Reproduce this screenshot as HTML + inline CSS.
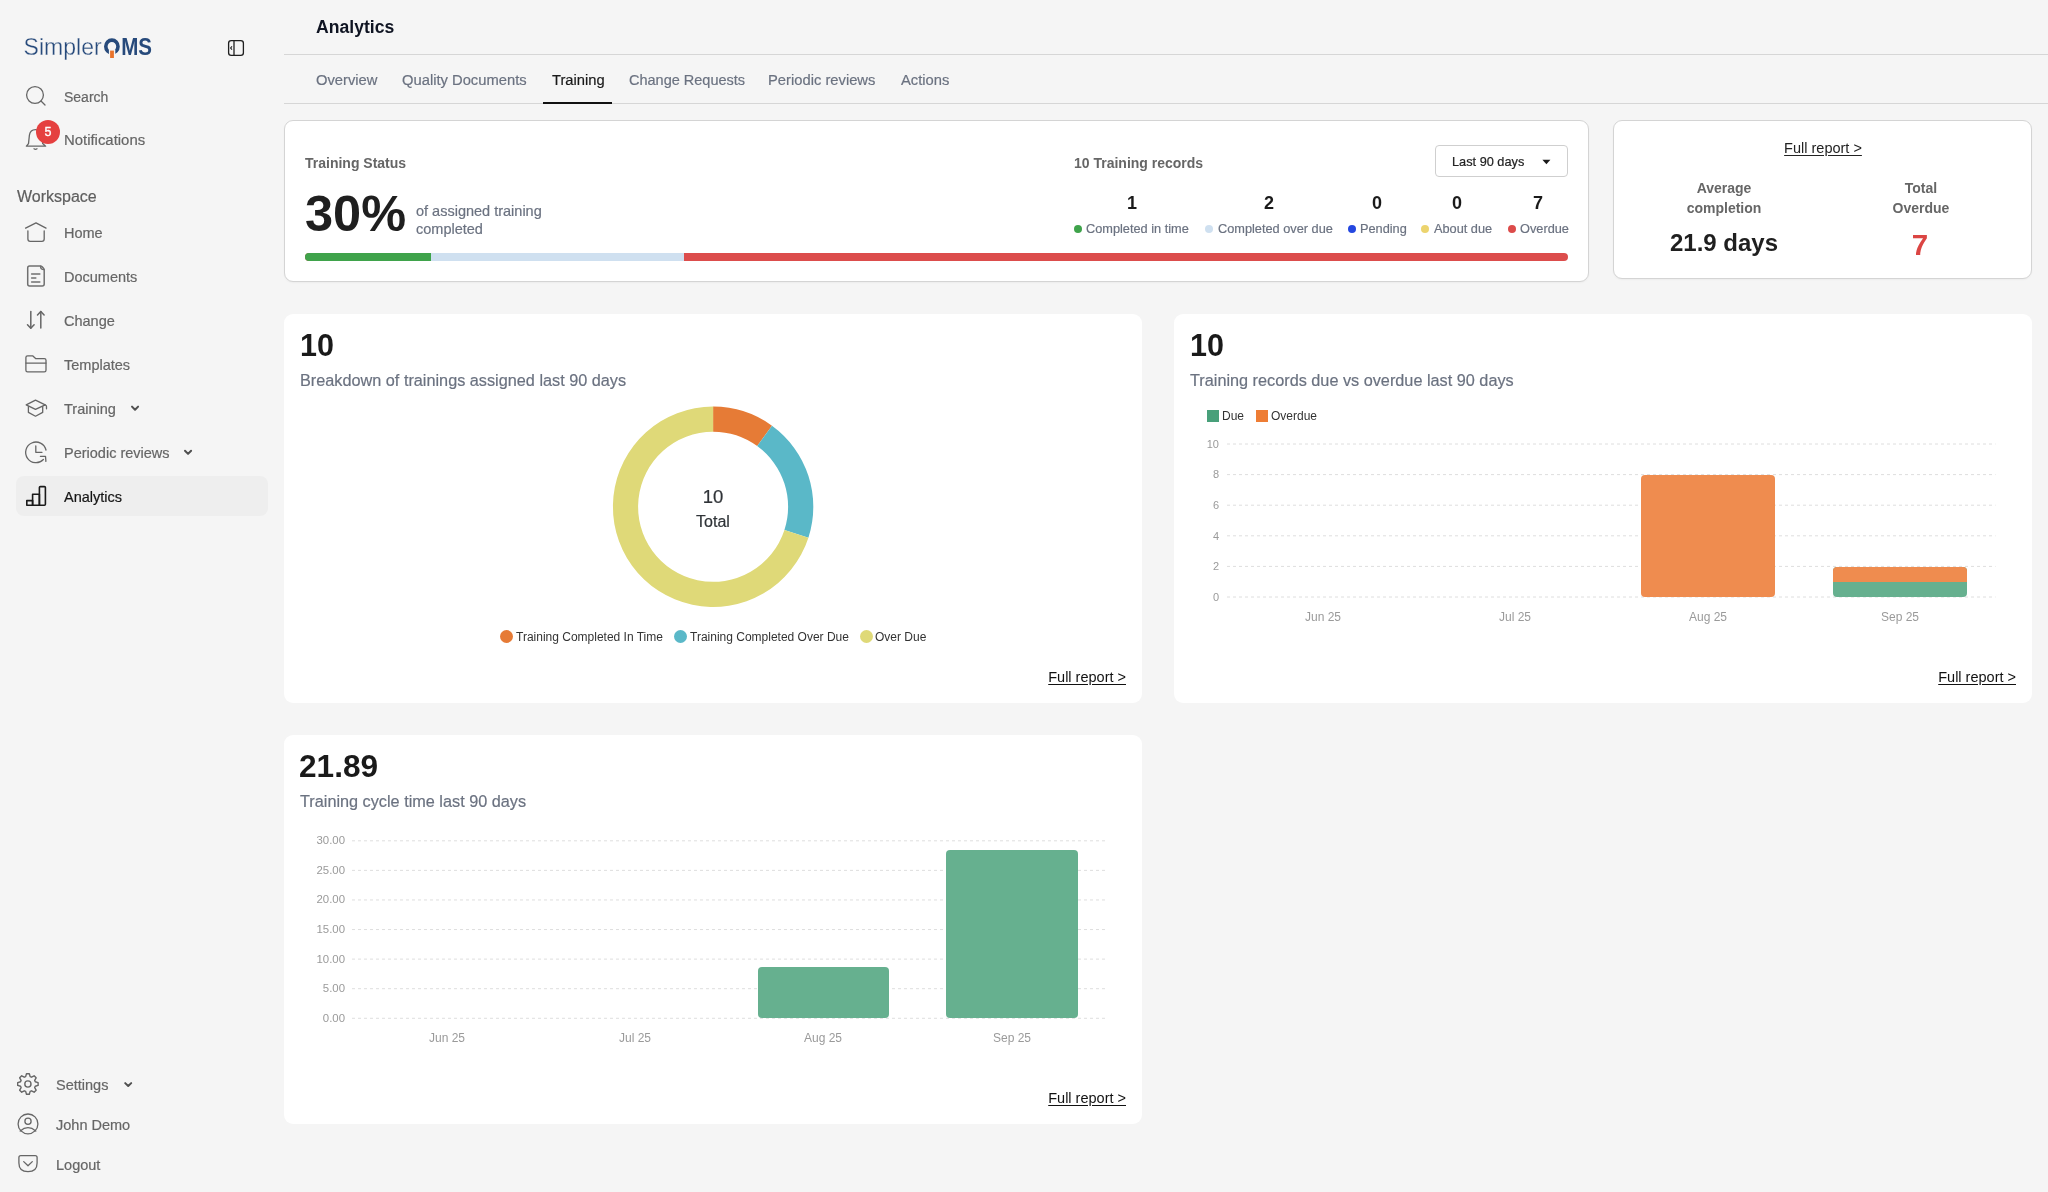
<!DOCTYPE html>
<html><head><meta charset="utf-8"><title>Analytics</title>
<style>
html,body{margin:0;padding:0;}
body{width:2048px;height:1192px;position:relative;overflow:hidden;background:#f5f5f5;font-family:"Liberation Sans", sans-serif;}
.t{position:absolute;will-change:transform;white-space:nowrap;font-variant-ligatures:none;line-height:1;font-family:"Liberation Sans", sans-serif;}
svg{font-family:"Liberation Sans", sans-serif;will-change:transform;}
</style></head><body>
<svg style="position:absolute;left:0;top:0" width="284" height="70">
<text x="23.6" y="54.7" font-family='Liberation Sans' font-size="23.6" fill="#274a7b" stroke="#f5f5f5" stroke-width="0.3" textLength="78" lengthAdjust="spacingAndGlyphs">Simpler</text>
<ellipse cx="111.9" cy="46.55" rx="6.1" ry="6.45" fill="none" stroke="#274a7b" stroke-width="3.6"/>
<rect x="108.9" y="49.5" width="6.4" height="8" fill="#f5f5f5"/>
<rect x="110.1" y="50.6" width="3.8" height="7.4" fill="#e9732c"/>
<text x="121.2" y="54.7" font-family='Liberation Sans' font-weight="bold" font-size="23.4" fill="#274a7b" textLength="30.8" lengthAdjust="spacingAndGlyphs">MS</text>
</svg>
<svg style="position:absolute;left:220px;top:32px" width="32" height="32" viewBox="220 32 32 32">
<rect x="228.6" y="40.6" width="14.8" height="14.8" rx="2.6" fill="none" stroke="#1f1f1f" stroke-width="1.3"/>
<line x1="234" y1="41" x2="234" y2="55" stroke="#1f1f1f" stroke-width="1.3"/>
<path d="M232 46.3 L230.6 48 L232 49.7" fill="none" stroke="#1f1f1f" stroke-width="1.1"/>
</svg>
<svg style="position:absolute;left:0;top:0;overflow:visible" width="1" height="1"><g fill="none" stroke="#666666" stroke-width="1.3" stroke-linecap="round" stroke-linejoin="round"><circle cx="35" cy="95" r="8.4"/><line x1="41" y1="101" x2="45" y2="105"/></g></svg>
<div class="t" style="left:64.30px;top:89.95px;font-size:14.0px;color:#666666;font-weight:400;-webkit-text-stroke:0.2px currentColor;">Search</div>
<svg style="position:absolute;left:0;top:0;overflow:visible" width="1" height="1"><g fill="none" stroke="#666666" stroke-width="1.3" stroke-linecap="round" stroke-linejoin="round"><path d="M26.4 146.2 L28.5 143.6 L29.4 135.2 C29.9 131.6 32.4 129.6 35.6 129.6 C38.8 129.6 41.3 131.6 41.8 135.2 L42.7 143.6 L45.6 146.2 Z"/><path d="M34 148.8 Q35.5 149.8 37 148.8"/></g></svg>
<div style="position:absolute;left:36px;top:120px;width:24px;height:24px;border-radius:50%;background:#e5403f;color:#fff;font-size:12.5px;line-height:24px;text-align:center;will-change:transform;-webkit-text-stroke:0.35px #fff;font-family:'Liberation Sans',sans-serif">5</div>
<div class="t" style="left:64.00px;top:133.19px;font-size:14.9px;color:#666666;font-weight:400;-webkit-text-stroke:0.2px currentColor;">Notifications</div>
<div class="t" style="left:16.80px;top:188.86px;font-size:16px;color:#5e5e5e;font-weight:400;-webkit-text-stroke:0.2px currentColor;">Workspace</div>
<div style="position:absolute;left:16px;top:476px;width:252px;height:40px;background:#eeeeee;border-radius:8px;"></div>
<div class="t" style="left:64.00px;top:225.53px;font-size:14.5px;color:#666666;font-weight:400;-webkit-text-stroke:0.2px currentColor;">Home</div>
<div class="t" style="left:64.00px;top:269.53px;font-size:14.5px;color:#666666;font-weight:400;-webkit-text-stroke:0.2px currentColor;">Documents</div>
<div class="t" style="left:64.00px;top:313.53px;font-size:14.5px;color:#666666;font-weight:400;-webkit-text-stroke:0.2px currentColor;">Change</div>
<div class="t" style="left:64.00px;top:357.53px;font-size:14.5px;color:#666666;font-weight:400;-webkit-text-stroke:0.2px currentColor;">Templates</div>
<div class="t" style="left:64.00px;top:401.53px;font-size:14.5px;color:#666666;font-weight:400;-webkit-text-stroke:0.2px currentColor;">Training</div>
<div class="t" style="left:64.00px;top:445.53px;font-size:14.5px;color:#666666;font-weight:400;-webkit-text-stroke:0.2px currentColor;">Periodic reviews</div>
<div class="t" style="left:64.00px;top:489.53px;font-size:14.5px;color:#151515;font-weight:400;-webkit-text-stroke:0.2px currentColor;">Analytics</div>
<svg style="position:absolute;left:0;top:0;overflow:visible" width="1" height="1"><g fill="none" stroke="#666666" stroke-width="1.3" stroke-linecap="round" stroke-linejoin="round"><path d="M25.6 228.1 L36 222.9 L46 228.1"/><path d="M27.9 230.8 V239 Q27.9 241.3 30.2 241.3 H41.9 Q44.2 241.3 44.2 239 V230.8"/></g></svg>
<svg style="position:absolute;left:0;top:0;overflow:visible" width="1" height="1"><g fill="none" stroke="#707070" stroke-width="1.5" stroke-linecap="round" stroke-linejoin="round"><path d="M29.6 266 H40.2 Q41.3 266 42.2 266.9 L43.3 268 Q44.2 268.9 44.2 270.1 V284 Q44.2 286 42.2 286 H29.6 Q27.7 286 27.7 284 V268 Q27.7 266 29.6 266 Z"/><path d="M40.6 266.2 Q40.4 269.6 44 269.6"/><line x1="31.6" y1="274" x2="39.8" y2="274"/><line x1="31.6" y1="277.9" x2="35.8" y2="277.9"/><line x1="31.6" y1="281.9" x2="39.8" y2="281.9"/></g></svg>
<svg style="position:absolute;left:0;top:0;overflow:visible" width="1" height="1"><g fill="none" stroke="#666666" stroke-width="1.5" stroke-linecap="round" stroke-linejoin="round"><line x1="30.8" y1="311.5" x2="30.8" y2="328"/><path d="M27.5 324.8 L30.8 328.3 L34.1 324.8"/><line x1="40.8" y1="311.5" x2="40.8" y2="328"/><path d="M37.5 315 L40.8 311.5 L44.1 315"/></g></svg>
<svg style="position:absolute;left:0;top:0;overflow:visible" width="1" height="1"><g fill="none" stroke="#666666" stroke-width="1.3" stroke-linecap="round" stroke-linejoin="round"><path d="M25.9 357.5 Q25.9 355.8 27.6 355.8 H32.6 L35.6 358.6 H44.3 Q46 358.6 46 360.3 V370.2 Q46 371.9 44.3 371.9 H27.6 Q25.9 371.9 25.9 370.2 Z"/><line x1="26" y1="363.1" x2="46" y2="363.1"/></g></svg>
<svg style="position:absolute;left:0;top:0;overflow:visible" width="1" height="1"><g fill="none" stroke="#666666" stroke-width="1.3" stroke-linecap="round" stroke-linejoin="round"><path d="M26.2 404.8 L35.5 400.2 L45.2 404.8 L35.5 409.4 Z"/><path d="M28.4 406.6 V412.4 L35.5 416.2 L42.7 412.4 V406.6"/><path d="M44.6 405 Q46.5 404.9 46.5 406.8 V408.8"/></g></svg>
<svg style="position:absolute;left:0;top:0;overflow:visible" width="1" height="1"><g fill="none" stroke="#666666" stroke-width="1.3" stroke-linecap="round" stroke-linejoin="round"><path d="M46 450 A10.3 10.3 0 1 0 43.4 459.5"/><path d="M35.8 446 V452.3 H42"/><path d="M40.4 456.3 H45.5 L45.9 461.4"/></g></svg>
<svg style="position:absolute;left:0;top:0;overflow:visible" width="1" height="1"><g fill="none" stroke="#1a1a1a" stroke-width="1.6" stroke-linecap="round" stroke-linejoin="round"><path d="M26.8 500.6 H32.6 V505.2 H26.8 Z"/><path d="M32.6 494.2 H39.4 V505.2 H32.6 Z"/><path d="M39.4 487.6 Q39.4 486.6 40.4 486.6 H44.4 Q45.4 486.6 45.4 487.6 V504.2 Q45.4 505.2 44.4 505.2 H39.4 Z"/></g></svg>
<svg style="position:absolute;left:0;top:0;overflow:visible" width="1" height="1"><g fill="none" stroke="#505050" stroke-width="2.0" stroke-linecap="round" stroke-linejoin="round"><path d="M132.0 406.6 L135.05 409.8 L138.1 406.6"/></g></svg>
<svg style="position:absolute;left:0;top:0;overflow:visible" width="1" height="1"><g fill="none" stroke="#505050" stroke-width="2.0" stroke-linecap="round" stroke-linejoin="round"><path d="M185.0 450.7 L188.05 453.9 L191.1 450.7"/></g></svg>
<div class="t" style="left:56.30px;top:1077.73px;font-size:14.5px;color:#666666;font-weight:400;-webkit-text-stroke:0.2px currentColor;">Settings</div>
<svg style="position:absolute;left:0;top:0;overflow:visible" width="1" height="1"><g fill="none" stroke="#505050" stroke-width="2.0" stroke-linecap="round" stroke-linejoin="round"><path d="M125.2 1083.1 L128.2 1086.0 L131.2 1083.1"/></g></svg>
<div class="t" style="left:56.30px;top:1117.53px;font-size:14.5px;color:#666666;font-weight:400;-webkit-text-stroke:0.2px currentColor;">John Demo</div>
<div class="t" style="left:56.30px;top:1158.43px;font-size:14.5px;color:#666666;font-weight:400;-webkit-text-stroke:0.2px currentColor;">Logout</div>
<svg style="position:absolute;left:0;top:0;overflow:visible" width="1" height="1"><g fill="none" stroke="#666666" stroke-width="1.4" stroke-linecap="round" stroke-linejoin="round"><polygon points="25.65,1076.64 26.47,1073.80 29.33,1073.80 30.15,1076.64 31.51,1077.20 34.10,1075.77 36.13,1077.80 34.70,1080.39 35.26,1081.75 38.10,1082.57 38.10,1085.43 35.26,1086.25 34.70,1087.61 36.13,1090.20 34.10,1092.23 31.51,1090.80 30.15,1091.36 29.33,1094.20 26.47,1094.20 25.65,1091.36 24.29,1090.80 21.70,1092.23 19.67,1090.20 21.10,1087.61 20.54,1086.25 17.70,1085.43 17.70,1082.57 20.54,1081.75 21.10,1080.39 19.67,1077.80 21.70,1075.77 24.29,1077.20"/><circle cx="27.9" cy="1084" r="3.1"/></g></svg>
<svg style="position:absolute;left:0;top:0;overflow:visible" width="1" height="1"><g fill="none" stroke="#666666" stroke-width="1.3" stroke-linecap="round" stroke-linejoin="round"><circle cx="28" cy="1123.9" r="9.9"/><circle cx="28" cy="1121.3" r="3.1"/><path d="M20.2 1131 Q28 1124.4 35.8 1131"/></g></svg>
<svg style="position:absolute;left:0;top:0;overflow:visible" width="1" height="1"><g fill="none" stroke="#666666" stroke-width="1.3" stroke-linecap="round" stroke-linejoin="round"><path d="M18.9 1157.6 Q18.9 1155.7 20.8 1155.7 H35.2 Q37.1 1155.7 37.1 1157.6 V1163 Q37.1 1171.7 28 1171.7 Q18.9 1171.7 18.9 1163 Z"/><path d="M23.7 1161.6 L28 1165.7 L32.3 1161.6"/></g></svg>
<div class="t" style="left:316.30px;top:19.10px;font-size:17.6px;color:#0f1422;font-weight:700;">Analytics</div>
<div style="position:absolute;left:284px;top:54px;width:1764px;height:1px;background:#d6d6d6;"></div>
<div class="t" style="left:316.30px;top:72.51px;font-size:14.75px;color:#6b7280;font-weight:400;-webkit-text-stroke:0.2px currentColor;">Overview</div>
<div class="t" style="left:401.90px;top:72.51px;font-size:14.75px;color:#6b7280;font-weight:400;-webkit-text-stroke:0.2px currentColor;">Quality Documents</div>
<div class="t" style="left:551.60px;top:72.51px;font-size:14.75px;color:#1a1a1a;font-weight:400;-webkit-text-stroke:0.2px currentColor;">Training</div>
<div class="t" style="left:628.80px;top:72.73px;font-size:14.5px;color:#6b7280;font-weight:400;-webkit-text-stroke:0.2px currentColor;">Change Requests</div>
<div class="t" style="left:768.30px;top:72.51px;font-size:14.75px;color:#6b7280;font-weight:400;-webkit-text-stroke:0.2px currentColor;">Periodic reviews</div>
<div class="t" style="left:900.60px;top:72.51px;font-size:14.75px;color:#6b7280;font-weight:400;-webkit-text-stroke:0.2px currentColor;">Actions</div>
<div style="position:absolute;left:284px;top:103px;width:1764px;height:1px;background:#d6d6d6;"></div>
<div style="position:absolute;left:543px;top:102px;width:69px;height:2px;background:#111111;"></div>
<div style="position:absolute;left:284px;top:120px;width:1303px;height:160px;background:#fff;border-radius:9px;border:1px solid #d4d4d4;box-shadow:0 1px 2px rgba(0,0,0,0.04);"></div>
<div style="position:absolute;left:1613px;top:120px;width:417px;height:157px;background:#fff;border-radius:9px;border:1px solid #d4d4d4;box-shadow:0 1px 2px rgba(0,0,0,0.04);"></div>
<div style="position:absolute;left:284px;top:314px;width:858px;height:389px;background:#fff;border-radius:9px;"></div>
<div style="position:absolute;left:1174px;top:314px;width:858px;height:389px;background:#fff;border-radius:9px;"></div>
<div style="position:absolute;left:284px;top:735px;width:858px;height:389px;background:#fff;border-radius:9px;"></div>
<div class="t" style="left:305.40px;top:156.25px;font-size:14px;color:#666666;font-weight:700;">Training Status</div>
<div class="t" style="left:304.60px;top:188.65px;font-size:50.5px;color:#1f1f1f;font-weight:700;">30%</div>
<div class="t" style="left:415.80px;top:203.93px;font-size:14.5px;color:#6b7280;font-weight:400;-webkit-text-stroke:0.2px currentColor;">of assigned training</div>
<div class="t" style="left:415.80px;top:221.73px;font-size:14.5px;color:#6b7280;font-weight:400;-webkit-text-stroke:0.2px currentColor;">completed</div>
<div class="t" style="left:1073.60px;top:156.25px;font-size:14px;color:#666666;font-weight:700;">10 Training records</div>
<div style="position:absolute;left:1435px;top:145px;width:131px;height:30px;border:1px solid #cfcfcf;border-radius:4px;background:#fff"></div>
<div class="t" style="left:1451.80px;top:156.01px;font-size:12.75px;color:#222222;font-weight:400;-webkit-text-stroke:0.2px currentColor;">Last 90 days</div>
<svg style="position:absolute;left:0;top:0;overflow:visible" width="1" height="1"><path d="M1542.4 159.7 H1550.4 L1546.4 164.2 Z" fill="#1a1a1a"/></svg>
<div class="t" style="left:731.60px;width:800px;text-align:center;top:193.76px;font-size:18px;color:#1a1a1a;font-weight:700;">1</div>
<div class="t" style="left:868.70px;width:800px;text-align:center;top:193.76px;font-size:18px;color:#1a1a1a;font-weight:700;">2</div>
<div class="t" style="left:976.80px;width:800px;text-align:center;top:193.76px;font-size:18px;color:#1a1a1a;font-weight:700;">0</div>
<div class="t" style="left:1056.90px;width:800px;text-align:center;top:193.76px;font-size:18px;color:#1a1a1a;font-weight:700;">0</div>
<div class="t" style="left:1138.10px;width:800px;text-align:center;top:193.76px;font-size:18px;color:#1a1a1a;font-weight:700;">7</div>
<div style="position:absolute;left:1074px;top:225px;width:8px;height:8px;border-radius:50%;background:#3fa34b"></div>
<div class="t" style="left:1086.30px;top:223.01px;font-size:12.75px;color:#6b7280;font-weight:400;-webkit-text-stroke:0.2px currentColor;">Completed in time</div>
<div style="position:absolute;left:1205px;top:225px;width:8px;height:8px;border-radius:50%;background:#cfe0f0"></div>
<div class="t" style="left:1217.60px;top:223.01px;font-size:12.75px;color:#6b7280;font-weight:400;-webkit-text-stroke:0.2px currentColor;">Completed over due</div>
<div style="position:absolute;left:1347.8px;top:225px;width:8px;height:8px;border-radius:50%;background:#2447e0"></div>
<div class="t" style="left:1359.50px;top:223.01px;font-size:12.75px;color:#6b7280;font-weight:400;-webkit-text-stroke:0.2px currentColor;">Pending</div>
<div style="position:absolute;left:1420.8px;top:225px;width:8px;height:8px;border-radius:50%;background:#ecd46e"></div>
<div class="t" style="left:1433.70px;top:223.01px;font-size:12.75px;color:#6b7280;font-weight:400;-webkit-text-stroke:0.2px currentColor;">About due</div>
<div style="position:absolute;left:1508px;top:225px;width:8px;height:8px;border-radius:50%;background:#dc4b4a"></div>
<div class="t" style="left:1520.30px;top:223.01px;font-size:12.75px;color:#6b7280;font-weight:400;-webkit-text-stroke:0.2px currentColor;">Overdue</div>
<div style="position:absolute;left:305px;top:253px;width:1263px;height:8px;border-radius:4px;overflow:hidden;background:#dc4d4c"><div style="position:absolute;left:0;top:0;width:126px;height:8px;background:#3fa34b"></div><div style="position:absolute;left:126px;top:0;width:253px;height:8px;background:#cfe0f0"></div></div>
<div class="t" style="left:1422.60px;width:800px;text-align:center;top:140.93px;font-size:14.5px;color:#222222;font-weight:400;text-decoration:underline;text-underline-offset:2px;">Full report &gt;</div>
<div class="t" style="left:1324.30px;width:800px;text-align:center;top:181.25px;font-size:14px;color:#666666;font-weight:700;">Average</div>
<div class="t" style="left:1324.30px;width:800px;text-align:center;top:200.85px;font-size:14px;color:#666666;font-weight:700;">completion</div>
<div class="t" style="left:1520.80px;width:800px;text-align:center;top:181.25px;font-size:14px;color:#666666;font-weight:700;">Total</div>
<div class="t" style="left:1520.80px;width:800px;text-align:center;top:200.85px;font-size:14px;color:#666666;font-weight:700;">Overdue</div>
<div class="t" style="left:1324.30px;width:800px;text-align:center;top:230.88px;font-size:24px;color:#1f1f1f;font-weight:700;">21.9 days</div>
<div class="t" style="left:1520.20px;width:800px;text-align:center;top:229.53px;font-size:29.5px;color:#db4543;font-weight:700;">7</div>
<div class="t" style="left:299.60px;top:330.48px;font-size:30.5px;color:#1a1a1a;font-weight:700;">10</div>
<div class="t" style="left:300.30px;top:371.84px;font-size:16.25px;color:#6b7280;font-weight:400;-webkit-text-stroke:0.2px currentColor;">Breakdown of trainings assigned last 90 days</div>
<svg style="position:absolute;left:0;top:0;overflow:visible" width="1" height="1"><path d="M713.10 406.60 A100.2 100.2 0 0 1 772.00 425.74 L757.18 446.12 A75 75 0 0 0 713.10 431.80 Z" fill="#e67b36"/><path d="M772.00 425.74 A100.2 100.2 0 0 1 808.40 537.76 L784.43 529.98 A75 75 0 0 0 757.18 446.12 Z" fill="#5ab8c8"/><path d="M808.40 537.76 A100.2 100.2 0 1 1 713.10 406.60 L713.10 431.80 A75 75 0 1 0 784.43 529.98 Z" fill="#dfd978"/></svg>
<div class="t" style="left:313.30px;width:800px;text-align:center;top:488.34px;font-size:18.5px;color:#2f3337;font-weight:400;-webkit-text-stroke:0.2px currentColor;">10</div>
<div class="t" style="left:313.20px;width:800px;text-align:center;top:513.56px;font-size:16px;color:#2f3337;font-weight:400;-webkit-text-stroke:0.2px currentColor;">Total</div>
<div style="position:absolute;left:500.4px;top:630.3px;width:13px;height:13px;border-radius:50%;background:#e67b36"></div>
<div class="t" style="left:516.20px;top:630.94px;font-size:12px;color:#333333;font-weight:400;">Training Completed In Time</div>
<div style="position:absolute;left:674.2px;top:630.3px;width:13px;height:13px;border-radius:50%;background:#5ab8c8"></div>
<div class="t" style="left:690.20px;top:630.94px;font-size:12px;color:#333333;font-weight:400;">Training Completed Over Due</div>
<div style="position:absolute;left:860.2px;top:630.3px;width:13px;height:13px;border-radius:50%;background:#dfd978"></div>
<div class="t" style="left:875.40px;top:630.94px;font-size:12px;color:#333333;font-weight:400;">Over Due</div>
<div class="t" style="left:326.30px;width:800px;text-align:right;top:669.63px;font-size:14.5px;color:#111111;font-weight:400;text-decoration:underline;text-underline-offset:2px;">Full report &gt;</div>
<div class="t" style="left:1189.60px;top:330.48px;font-size:30.5px;color:#1a1a1a;font-weight:700;">10</div>
<div class="t" style="left:1190.30px;top:371.84px;font-size:16.25px;color:#6b7280;font-weight:400;-webkit-text-stroke:0.2px currentColor;">Training records due vs overdue last 90 days</div>
<div style="position:absolute;left:1207px;top:410px;width:12px;height:12px;background:#48a07a;"></div>
<div class="t" style="left:1222.30px;top:409.54px;font-size:12px;color:#333333;font-weight:400;">Due</div>
<div style="position:absolute;left:1256px;top:410px;width:12px;height:12px;background:#ee7d35;"></div>
<div class="t" style="left:1271.20px;top:409.54px;font-size:12px;color:#333333;font-weight:400;">Overdue</div>
<svg style="position:absolute;left:0;top:0;overflow:visible" width="1" height="1"><line x1="1227" y1="444.00" x2="1995.5" y2="444.00" stroke="#dedede" stroke-width="1" stroke-dasharray="3 3"/><line x1="1227" y1="474.60" x2="1995.5" y2="474.60" stroke="#dedede" stroke-width="1" stroke-dasharray="3 3"/><line x1="1227" y1="505.20" x2="1995.5" y2="505.20" stroke="#dedede" stroke-width="1" stroke-dasharray="3 3"/><line x1="1227" y1="535.80" x2="1995.5" y2="535.80" stroke="#dedede" stroke-width="1" stroke-dasharray="3 3"/><line x1="1227" y1="566.40" x2="1995.5" y2="566.40" stroke="#dedede" stroke-width="1" stroke-dasharray="3 3"/><line x1="1227" y1="597.00" x2="1995.5" y2="597.00" stroke="#dedede" stroke-width="1" stroke-dasharray="3 3"/></svg>
<div class="t" style="left:419.30px;width:800px;text-align:right;top:438.79px;font-size:11px;color:#9a9a9a;font-weight:400;">10</div>
<div class="t" style="left:419.30px;width:800px;text-align:right;top:469.39px;font-size:11px;color:#9a9a9a;font-weight:400;">8</div>
<div class="t" style="left:419.30px;width:800px;text-align:right;top:499.99px;font-size:11px;color:#9a9a9a;font-weight:400;">6</div>
<div class="t" style="left:419.30px;width:800px;text-align:right;top:530.59px;font-size:11px;color:#9a9a9a;font-weight:400;">4</div>
<div class="t" style="left:419.30px;width:800px;text-align:right;top:561.19px;font-size:11px;color:#9a9a9a;font-weight:400;">2</div>
<div class="t" style="left:419.30px;width:800px;text-align:right;top:591.79px;font-size:11px;color:#9a9a9a;font-weight:400;">0</div>
<div class="t" style="left:923.00px;width:800px;text-align:center;top:610.84px;font-size:12px;color:#9a9a9a;font-weight:400;">Jun 25</div>
<div class="t" style="left:1115.20px;width:800px;text-align:center;top:610.84px;font-size:12px;color:#9a9a9a;font-weight:400;">Jul 25</div>
<div class="t" style="left:1307.50px;width:800px;text-align:center;top:610.84px;font-size:12px;color:#9a9a9a;font-weight:400;">Aug 25</div>
<div class="t" style="left:1499.60px;width:800px;text-align:center;top:610.84px;font-size:12px;color:#9a9a9a;font-weight:400;">Sep 25</div>
<div style="position:absolute;left:1640.6px;top:474.7px;width:134.2px;height:122px;background:#ef8c4f;border-radius:4px"></div>
<div style="position:absolute;left:1832.7px;top:567px;width:134.3px;height:29.7px;border-radius:4px;overflow:hidden;background:#66b08f"><div style="position:absolute;left:0;top:0;width:100%;height:15px;background:#ef8c4f"></div></div>
<div class="t" style="left:1216.30px;width:800px;text-align:right;top:669.63px;font-size:14.5px;color:#111111;font-weight:400;text-decoration:underline;text-underline-offset:2px;">Full report &gt;</div>
<div class="t" style="left:299.20px;top:751.05px;font-size:31.6px;color:#1a1a1a;font-weight:700;">21.89</div>
<div class="t" style="left:300.30px;top:792.94px;font-size:16.25px;color:#6b7280;font-weight:400;-webkit-text-stroke:0.2px currentColor;">Training cycle time last 90 days</div>
<svg style="position:absolute;left:0;top:0;overflow:visible" width="1" height="1"><line x1="352" y1="840.80" x2="1105.6" y2="840.80" stroke="#dedede" stroke-width="1" stroke-dasharray="3 3"/><line x1="352" y1="870.38" x2="1105.6" y2="870.38" stroke="#dedede" stroke-width="1" stroke-dasharray="3 3"/><line x1="352" y1="899.96" x2="1105.6" y2="899.96" stroke="#dedede" stroke-width="1" stroke-dasharray="3 3"/><line x1="352" y1="929.54" x2="1105.6" y2="929.54" stroke="#dedede" stroke-width="1" stroke-dasharray="3 3"/><line x1="352" y1="959.12" x2="1105.6" y2="959.12" stroke="#dedede" stroke-width="1" stroke-dasharray="3 3"/><line x1="352" y1="988.70" x2="1105.6" y2="988.70" stroke="#dedede" stroke-width="1" stroke-dasharray="3 3"/><line x1="352" y1="1018.28" x2="1105.6" y2="1018.28" stroke="#dedede" stroke-width="1" stroke-dasharray="3 3"/></svg>
<div class="t" style="left:-455.40px;width:800px;text-align:right;top:835.25px;font-size:11.4px;color:#9a9a9a;font-weight:400;">30.00</div>
<div class="t" style="left:-455.40px;width:800px;text-align:right;top:864.83px;font-size:11.4px;color:#9a9a9a;font-weight:400;">25.00</div>
<div class="t" style="left:-455.40px;width:800px;text-align:right;top:894.41px;font-size:11.4px;color:#9a9a9a;font-weight:400;">20.00</div>
<div class="t" style="left:-455.40px;width:800px;text-align:right;top:923.99px;font-size:11.4px;color:#9a9a9a;font-weight:400;">15.00</div>
<div class="t" style="left:-455.40px;width:800px;text-align:right;top:953.57px;font-size:11.4px;color:#9a9a9a;font-weight:400;">10.00</div>
<div class="t" style="left:-455.40px;width:800px;text-align:right;top:983.15px;font-size:11.4px;color:#9a9a9a;font-weight:400;">5.00</div>
<div class="t" style="left:-455.40px;width:800px;text-align:right;top:1012.73px;font-size:11.4px;color:#9a9a9a;font-weight:400;">0.00</div>
<div class="t" style="left:46.50px;width:800px;text-align:center;top:1031.84px;font-size:12px;color:#9a9a9a;font-weight:400;">Jun 25</div>
<div class="t" style="left:234.80px;width:800px;text-align:center;top:1031.84px;font-size:12px;color:#9a9a9a;font-weight:400;">Jul 25</div>
<div class="t" style="left:423.20px;width:800px;text-align:center;top:1031.84px;font-size:12px;color:#9a9a9a;font-weight:400;">Aug 25</div>
<div class="t" style="left:611.60px;width:800px;text-align:center;top:1031.84px;font-size:12px;color:#9a9a9a;font-weight:400;">Sep 25</div>
<div style="position:absolute;left:757.6px;top:966.8px;width:131.4px;height:51.5px;background:#66b08f;border-radius:4px"></div>
<div style="position:absolute;left:946px;top:850px;width:131.7px;height:168.3px;background:#66b08f;border-radius:4px"></div>
<div class="t" style="left:326.30px;width:800px;text-align:right;top:1090.63px;font-size:14.5px;color:#111111;font-weight:400;text-decoration:underline;text-underline-offset:2px;">Full report &gt;</div>
</body></html>
